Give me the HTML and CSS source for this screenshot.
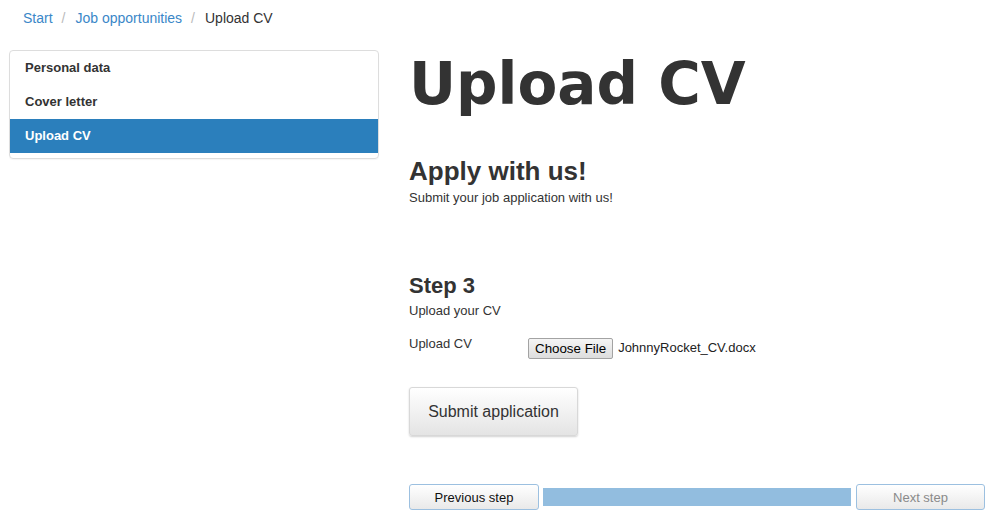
FILE: index.html
```html
<!DOCTYPE html>
<html lang="en">
<head>
<meta charset="utf-8">
<title>Upload CV</title>
<link rel="stylesheet" href="styles.css">
</head>
<body>
<nav class="breadcrumb">
  <a href="#" class="crumb-link">Start</a>
  <span class="crumb-sep">/</span>
  <a href="#" class="crumb-link">Job opportunities</a>
  <span class="crumb-sep">/</span>
  <span class="crumb-current">Upload CV</span>
</nav>

<div class="layout">
  <aside class="sidebar">
    <ul class="step-list">
      <li class="step-item">Personal data</li>
      <li class="step-item">Cover letter</li>
      <li class="step-item active">Upload CV</li>
    </ul>
  </aside>

  <main class="main">
    <h1 class="page-title">Upload CV</h1>

    <h2 class="apply-title">Apply with us!</h2>
    <p class="section-text">Submit your job application with us!</p>

    <h3 class="step-title">Step 3</h3>
    <p class="section-text">Upload your CV</p>

    <div class="form-row">
      <label class="form-label">Upload CV</label>
      <div class="file-field">
        <span class="file-button">Choose File</span>
        <span class="file-name">JohnnyRocket_CV.docx</span>
      </div>
    </div>

    <button class="submit-button" type="button">Submit application</button>

    <div class="step-nav">
      <button class="nav-button" type="button">Previous step</button>
      <div class="progress-bar"></div>
      <button class="nav-button disabled" type="button">Next step</button>
    </div>
  </main>
</div>
</body>
</html>
```

FILE: styles.css
```css
* {
  box-sizing: border-box;
}

body {
  margin: 0;
  font-family: "Liberation Sans", Arial, sans-serif;
  font-size: 13px;
  color: #333;
  background: #fff;
}

.breadcrumb {
  display: flex;
  align-items: center;
  padding: 8px 23px;
  font-size: 14px;
  line-height: 20px;
}

.crumb-link {
  color: #3a87c8;
  text-decoration: none;
}

.crumb-sep {
  color: #bbb;
  margin: 0 10px 0 9px;
}

.crumb-current {
  color: #333;
}

.layout {
  display: grid;
  grid-template-columns: 370px 1fr;
  column-gap: 30px;
  margin-top: 14px;
  padding: 0 14px 0 9px;
}

.sidebar {
  align-self: start;
}

.step-list {
  list-style: none;
  margin: 0;
  padding: 0 0 5px;
  border: 1px solid #ddd;
  border-radius: 4px;
  box-shadow: 0 1px 1px rgba(0, 0, 0, 0.04);
}

.step-item {
  height: 34px;
  line-height: 34px;
  padding: 0 15px;
  font-weight: bold;
  font-size: 13px;
  color: #333;
}

.step-item.active {
  background: #2b7fbc;
  color: #fff;
}

.main {
  padding-top: 2px;
}

.page-title {
  margin: 0;
  font-family: "DejaVu Sans", Verdana, sans-serif;
  font-weight: bold;
  font-size: 58px;
  line-height: 64px;
  color: #333;
}

.apply-title {
  margin: 40px 0 0;
  font-size: 26px;
  line-height: 30px;
  font-weight: bold;
  color: #333;
}

.step-title {
  margin: 66px 0 0;
  font-size: 22px;
  line-height: 26px;
  font-weight: bold;
  color: #333;
}

.section-text {
  margin: 3px 0 0;
  line-height: 18px;
}

.form-row {
  display: flex;
  align-items: flex-start;
  margin-top: 15px;
}

.form-label {
  width: 119px;
  line-height: 18px;
}

.file-field {
  display: flex;
  align-items: center;
  margin-top: 3px;
}

.file-button {
  display: inline-block;
  height: 21px;
  line-height: 19px;
  padding: 0 6px;
  font-size: 13.33px;
  color: #000;
  border: 1px solid #a3a3a3;
  border-radius: 2px;
  background: linear-gradient(#f5f5f5, #dddddd);
}

.file-name {
  margin-left: 5px;
  margin-top: -3px;
  color: #222;
}

.submit-button {
  display: block;
  margin-top: 28px;
  width: 169px;
  height: 49px;
  padding: 0;
  font-family: inherit;
  font-size: 16px;
  color: #333;
  border: 1px solid #d8d8d8;
  border-radius: 3px;
  background: linear-gradient(#ffffff, #e4e4e4);
  box-shadow: 0 1px 2px rgba(0, 0, 0, 0.18);
}

.step-nav {
  display: flex;
  align-items: center;
  margin-top: 48px;
  gap: 4px;
}

.nav-button {
  flex: 0 0 130px;
  height: 26px;
  padding: 0;
  font-family: inherit;
  font-size: 13px;
  color: #111;
  border: 1px solid #9cc0e0;
  border-radius: 3px;
  background: linear-gradient(#ffffff, #e9e9e9);
}

.nav-button.disabled {
  flex-basis: 129px;
  color: #8a8a8a;
}

.progress-bar {
  flex: 1;
  height: 18px;
  margin-right: 1px;
  background: #92bddf;
}
```
